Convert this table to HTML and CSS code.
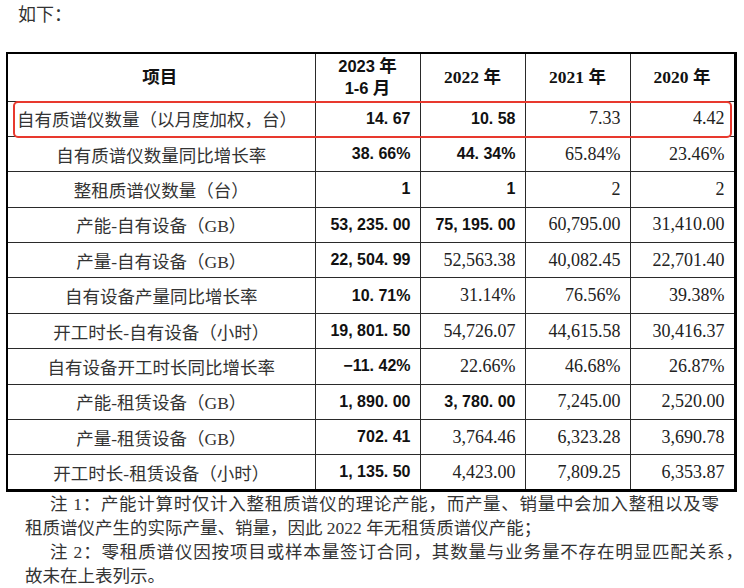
FILE: index.html
```html
<!DOCTYPE html>
<html lang="zh-CN">
<head>
<meta charset="utf-8">
<title>产能与产量</title>
<link rel="stylesheet" href="styles.css">
</head>
<body>
<p class="intro">如下：</p>
<div class="table-wrap">
  <table class="data">
    <colgroup>
      <col class="c-item"><col class="c-num"><col class="c-num"><col class="c-num"><col class="c-last">
    </colgroup>
    <thead>
      <tr>
        <th class="item-h">项目</th>
        <th class="yr"><span class="sans">2023</span> 年<br><span class="sans">1-6</span> 月</th>
        <th class="yr">2022 年</th>
        <th class="yr">2021 年</th>
        <th class="yr">2020 年</th>
      </tr>
    </thead>
    <tbody>
      <tr>
        <td class="label left">自有质谱仪数量（以月度加权，台）</td>
        <td class="b">14. 67</td><td class="b">10. 58</td><td>7.33</td><td>4.42</td>
      </tr>
      <tr>
        <td class="label">自有质谱仪数量同比增长率</td>
        <td class="b">38. 66%</td><td class="b">44. 34%</td><td>65.84%</td><td>23.46%</td>
      </tr>
      <tr>
        <td class="label">整租质谱仪数量（台）</td>
        <td class="b">1</td><td class="b">1</td><td>2</td><td>2</td>
      </tr>
      <tr>
        <td class="label">产能-自有设备（GB）</td>
        <td class="b">53, 235. 00</td><td class="b">75, 195. 00</td><td>60,795.00</td><td>31,410.00</td>
      </tr>
      <tr>
        <td class="label">产量-自有设备（GB）</td>
        <td class="b">22, 504. 99</td><td>52,563.38</td><td>40,082.45</td><td>22,701.40</td>
      </tr>
      <tr>
        <td class="label">自有设备产量同比增长率</td>
        <td class="b">10. 71%</td><td>31.14%</td><td>76.56%</td><td>39.38%</td>
      </tr>
      <tr>
        <td class="label">开工时长-自有设备（小时）</td>
        <td class="b">19, 801. 50</td><td>54,726.07</td><td>44,615.58</td><td>30,416.37</td>
      </tr>
      <tr>
        <td class="label">自有设备开工时长同比增长率</td>
        <td class="b">−11. 42%</td><td>22.66%</td><td>46.68%</td><td>26.87%</td>
      </tr>
      <tr>
        <td class="label">产能-租赁设备（GB）</td>
        <td class="b">1, 890. 00</td><td class="b">3, 780. 00</td><td>7,245.00</td><td>2,520.00</td>
      </tr>
      <tr>
        <td class="label">产量-租赁设备（GB）</td>
        <td class="b">702. 41</td><td>3,764.46</td><td>6,323.28</td><td>3,690.78</td>
      </tr>
      <tr>
        <td class="label">开工时长-租赁设备（小时）</td>
        <td class="b">1, 135. 50</td><td>4,423.00</td><td>7,809.25</td><td>6,353.87</td>
      </tr>
    </tbody>
  </table>
  <div class="highlight"></div>
</div>
<div class="notes">
  <div class="note-line n1">注 1：产能计算时仅计入整租质谱仪的理论产能，而产量、销量中会加入整租以及零</div>
  <div class="note-line">租质谱仪产生的实际产量、销量，因此 2022 年无租赁质谱仪产能；</div>
  <div class="note-line n3">注 2：零租质谱仪因按项目或样本量签订合同，其数量与业务量不存在明显匹配关系，</div>
  <div class="note-line">故未在上表列示。</div>
</div>
</body>
</html>
```
FILE: styles.css
```css
html, body {
  margin: 0;
  padding: 0;
  background: #ffffff;
}
body {
  font-family: "Liberation Serif", "Noto Sans CJK SC", serif;
  color: #222;
  font-size: 17.5px;
}
.intro {
  margin: 3px 0 0 18px;
  line-height: 24px;
  font-size: 18px;
  color: #333;
}
.table-wrap {
  position: relative;
  margin: 25px 0 0 6px;
  width: 728px;
}
.data {
  border-collapse: collapse;
  table-layout: fixed;
  width: 728px;
  border-top: 2px solid #000;
  border-left: 2px solid #000;
  border-right: 3px solid #000;
  border-bottom: 3px solid #000;
}
.c-item { width: 308px; }
.c-num { width: 105px; }
.c-last { width: 105px; }
.data th,
.data td {
  border: 1px solid #2a2a2a;
  padding: 0 9px 0 6px;
  white-space: nowrap;
  overflow: hidden;
}
.data thead tr { height: 48px; }
.data tbody tr { height: 35.4px; }
.data th {
  font-weight: bold;
  text-align: center;
  line-height: 22px;
  color: #111;
  font-size: 17.5px;
}
.data th.yr { padding: 0; }
.sans {
  font-family: "Liberation Sans", "Noto Sans CJK SC", sans-serif;
  font-size: 16.5px;
}
.data td {
  text-align: right;
  font-size: 18px;
  color: #222;
}
.data td.label {
  text-align: center;
  color: #333;
  font-size: 17.5px;
  padding: 0 4px;
}
.data td.label.left {
  text-align: left;
  padding-left: 9px;
}
.data td.b {
  font-family: "Liberation Sans", "Noto Sans CJK SC", sans-serif;
  font-weight: bold;
  font-size: 16px;
  color: #111;
}
.highlight {
  position: absolute;
  left: 7px;
  top: 49px;
  width: 719px;
  height: 37px;
  box-sizing: border-box;
  border: 2px solid #e8392e;
  border-radius: 5px;
  pointer-events: none;
}
.notes {
  padding-left: 25px;
  font-size: 17.5px;
  line-height: 24px;
  color: #333;
}
.note-line {
  white-space: nowrap;
}
.n1 {
  text-indent: 25px;
  letter-spacing: 0.7px;
}
.n3 {
  text-indent: 25px;
  letter-spacing: 0.85px;
}
```
